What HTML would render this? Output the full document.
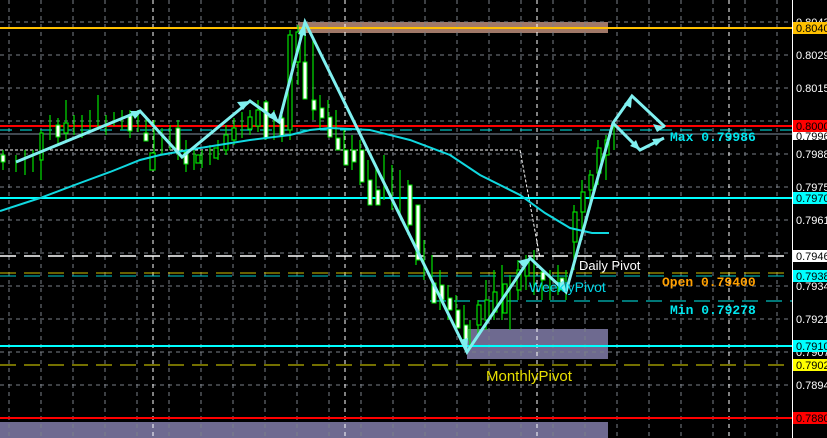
<!DOCTYPE html>
<html><head><meta charset="utf-8"><style>
html,body{margin:0;padding:0;background:#000;width:827px;height:438px;overflow:hidden}
svg{display:block}
text{font-family:"Liberation Sans",sans-serif}
.m{font-family:"Liberation Mono",monospace;font-weight:bold;font-size:13px}
.ax{font-size:11px;fill:#fff}
</style></head><body>
<svg width="827" height="438" viewBox="0 0 827 438" xmlns="http://www.w3.org/2000/svg">
<rect width="827" height="438" fill="#000"/>
<rect x="298" y="22" width="310" height="11" fill="#a07868"/>
<rect x="467" y="329" width="141" height="30" fill="#6e6a90"/>
<rect x="0" y="422" width="608" height="16" fill="#6e6a90"/>
<g stroke="#7a8088" stroke-width="1" stroke-dasharray="4,4" fill="none">
<path d="M9 0V438M41 0V438M73 0V438M105 0V438M137 0V438M169 0V438M201 0V438M233 0V438M265 0V438M297 0V438M329 0V438M361 0V438M393 0V438M425 0V438M457 0V438M489 0V438M521 0V438M553 0V438M585 0V438M617 0V438M649 0V438M681 0V438M713 0V438M745 0V438M777 0V438"/>
<path d="M0 22H792M0 55H792M0 88H792M0 121H792M0 154H792M0 187H792M0 220H792M0 253H792M0 286H792M0 319H792M0 352H792M0 385H792"/>
</g>
<g stroke="#fff" stroke-dasharray="4,4" fill="none"><path d="M153 0V438M345 0V438M537 0V438M729 0V438"/></g>
<g fill="none">
<path d="M0 28H792" stroke="#ffc000" stroke-width="2"/>
<path d="M0 126H792" stroke="#f00" stroke-width="2"/>
<path d="M0 134H792" stroke="#8090a0" stroke-width="1"/>
<path d="M0 198H792" stroke="#0ff" stroke-width="2"/>
<path d="M0 346H792" stroke="#0ff" stroke-width="2"/>
<path d="M0 418H792" stroke="#f00" stroke-width="2"/>
<path d="M0 256H792" stroke="#fff" stroke-width="1.5" stroke-dasharray="16,8"/>
<path d="M0 273H792" stroke="#d0c000" stroke-width="1" stroke-dasharray="16,8"/>
<path d="M0 276H792" stroke="#0cc" stroke-width="1" stroke-dasharray="16,8"/>
<path d="M430 301H792" stroke="#0ee" stroke-width="1" stroke-dasharray="16,8"/>
<path d="M0 365H792" stroke="#e8e000" stroke-width="1" stroke-dasharray="16,8"/>
<path d="M0 130H792" stroke="#0ee" stroke-width="1" stroke-dasharray="12,8"/>
<path d="M0 150H520L540 258" stroke="#fff" stroke-width="1" stroke-dasharray="3,2"/>
</g>
<g stroke="#00e000" stroke-width="1.2" fill="none">
<path d="M3 150V170M16 155V172M25 150V175M33 150V172M41 130V180M50 115V140M58 118V145M66 100V140M74 115V135M82 115V138M90 110V130M98 95V130M106 115V135M114 112V126M122 110V130M130 110V138M138 110V132M146 118V140M154 120V165M162 128V155M170 125V150M178 120V160M186 140V172M194 150V170M202 150V168M210 145V165M218 140V160M226 125V155M234 118V145M242 112V138M250 110V135M258 100V132M266 100V140M274 110V140M282 115V142M290 30V140M298 25V85M305 20V80M313 40V120M320 95V130M328 100V135M336 110V145M344 130V165M352 135V170M360 140V185M368 160V200M376 165V205M384 155V200M392 165V210M400 170V215M408 180V235M416 205V265M424 240V280M432 255V300M440 270V310M448 285V320M456 295V330M464 305V345M470 320V350M478 300V335M486 280V330M494 270V320M502 265V320M510 275V330M518 260V300M526 255V290M534 250V295M542 270V300M550 270V300M558 265V295M566 270V300M574 205V270M582 180V240M590 170V210M598 140V185M606 135V180M614 125V150"/>
</g>
<g fill="#000" stroke="#00e000" stroke-width="1.2">
<rect x="40" y="133" width="3" height="27"/><rect x="64" y="123" width="4" height="10"/><rect x="150" y="153" width="5" height="17"/><rect x="196" y="155" width="4" height="8"/><rect x="214" y="148" width="4" height="10"/><rect x="224" y="135" width="4" height="15"/><rect x="232" y="128" width="4" height="12"/><rect x="248" y="117" width="4" height="12"/><rect x="256" y="110" width="4" height="16"/><rect x="288" y="35" width="4" height="95"/><rect x="296" y="32" width="4" height="30"/><rect x="477" y="305" width="4" height="20"/><rect x="485" y="300" width="4" height="20"/><rect x="493" y="292" width="4" height="20"/><rect x="503" y="284" width="4" height="29"/><rect x="517" y="270" width="4" height="20"/><rect x="525" y="262" width="4" height="14"/><rect x="573" y="212" width="4" height="30"/><rect x="581" y="192" width="4" height="20"/><rect x="589" y="175" width="4" height="15"/><rect x="597" y="148" width="4" height="25"/><rect x="605" y="140" width="4" height="15"/>
</g>
<g fill="#fff" stroke="#00e000" stroke-width="1">
<rect x="1" y="155" width="4" height="7"/><rect x="56" y="125" width="4" height="12"/><rect x="128" y="115" width="4" height="16"/><rect x="144" y="133" width="4" height="8"/><rect x="176" y="128" width="4" height="25"/><rect x="184" y="152" width="4" height="12"/><rect x="264" y="102" width="4" height="36"/><rect x="280" y="118" width="4" height="18"/><rect x="303" y="62" width="4" height="37"/><rect x="312" y="100" width="4" height="10"/><rect x="320" y="108" width="4" height="10"/><rect x="328" y="117" width="4" height="20"/><rect x="336" y="138" width="4" height="12"/><rect x="344" y="150" width="4" height="15"/><rect x="352" y="150" width="4" height="12"/><rect x="360" y="150" width="4" height="32"/><rect x="368" y="180" width="4" height="25"/><rect x="376" y="190" width="4" height="15"/><rect x="408" y="185" width="4" height="40"/><rect x="416" y="205" width="4" height="55"/><rect x="432" y="283" width="4" height="20"/><rect x="440" y="285" width="4" height="15"/><rect x="448" y="298" width="4" height="12"/><rect x="456" y="310" width="4" height="18"/><rect x="464" y="325" width="4" height="15"/><rect x="541" y="272" width="4" height="8"/><rect x="560" y="278" width="4" height="12"/>
</g>
<path d="M0 211L40 198L80 183L110 172L140 160L160 155L200 148L250 140L290 135L310 130L330 128L370 130L410 140L450 155L480 175L520 195L545 213L570 228L592 233L609 233" fill="none" stroke="#10d8e0" stroke-width="2"/>
<g fill="none" stroke="#80f0f0" stroke-width="3">
<path d="M16 162L140 111L182 157L250 101L279 122L305 22L467 352L530 258L566 292L613 123L632 96L665 127"/>
<path d="M613 123L640 150L664 138"/>
</g>
<g fill="#80f0f0">
<path d="M142 111l-12 0l5 8z"/><path d="M250 101l-13 1l6 8z"/><path d="M279 122l-5-11l-6 6z"/><path d="M305 22l-7 12l8 2z"/><path d="M467 352l-7-12l8-2z"/><path d="M530 258l-12 3l6 7z"/><path d="M566 292l-2-12l-7 5z"/><path d="M632 96l-8 8l7 4z"/><path d="M665 127l-12-3l4 8z"/><path d="M640 150l-4-10l-6 6z"/><path d="M664 138l-12 1l4 7z"/>
</g>
<text x="579" y="270" fill="#fff" font-size="13">Daily Pivot</text>
<text x="529" y="292" fill="#00d8e8" font-size="14">WeeklyPivot</text>
<text x="486" y="381" fill="#e8e000" font-size="15">MonthlyPivot</text>
<text x="662" y="286" fill="#ffa000" class="m">Open 0.79400</text>
<text x="670" y="314" fill="#00e8f0" class="m">Min 0.79278</text>
<text x="670" y="141" fill="#00e8f0" class="m">Max 0.79986</text>
<rect x="793" y="0" width="34" height="438" fill="#000"/>
<path d="M792.5 0V438" stroke="#fff"/>
<g class="ax">
<text x="796" y="26">0.80430</text>
<text x="796" y="59">0.80290</text>
<text x="796" y="92">0.80155</text>
<text x="796" y="158">0.79885</text>
<text x="796" y="191">0.79750</text>
<text x="796" y="224">0.79615</text>
<text x="796" y="290">0.79345</text>
<text x="796" y="323">0.79210</text>
<text x="796" y="356">0.79075</text>
<text x="796" y="389">0.78940</text>
</g>
<g font-size="11">
<rect x="793" y="22" width="34" height="12" fill="#ffc000"/><text x="796" y="32" fill="#000">0.80400</text>
<rect x="793" y="120" width="34" height="12" fill="#f00"/><text x="796" y="130" fill="#000">0.80000</text>
<rect x="793" y="132" width="34" height="8" fill="#fff"/><text x="796" y="140" fill="#000">0.79965</text>
<rect x="793" y="192" width="34" height="12" fill="#0ff"/><text x="796" y="202" fill="#000">0.79700</text>
<rect x="793" y="250" width="34" height="12" fill="#fff"/><text x="796" y="260" fill="#000">0.79462</text>
<rect x="793" y="270" width="34" height="12" fill="#0ff"/><text x="796" y="280" fill="#000">0.79381</text>
<rect x="793" y="340" width="34" height="12" fill="#0ff"/><text x="796" y="350" fill="#000">0.79100</text>
<rect x="793" y="359" width="34" height="12" fill="#ff0"/><text x="796" y="369" fill="#000">0.79021</text>
<rect x="793" y="412" width="34" height="12" fill="#f00"/><text x="796" y="422" fill="#000">0.78800</text>
</g>
</svg>
</body></html>
